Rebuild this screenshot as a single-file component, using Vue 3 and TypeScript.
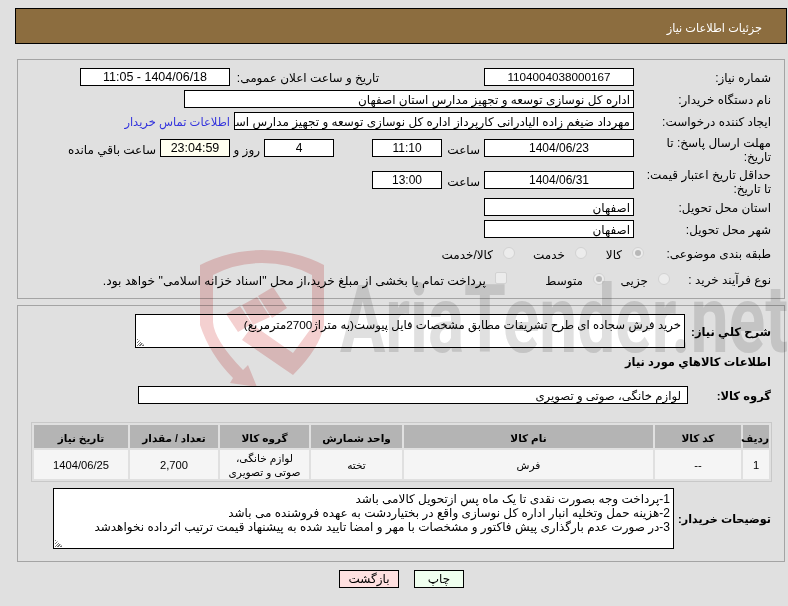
<script setup lang="ts">
const headers: string[] = ['ردیف', 'کد کالا', 'نام کالا', 'واحد شمارش', 'گروه کالا', 'تعداد / مقدار', 'تاریخ نیاز'];
</script>

<template>
  <div class="page" dir="rtl">
    <svg class="mark" viewBox="0 0 788 606" aria-hidden="true">
      <path class="red" d="M200 265 Q230 250 262 250 Q295 250 324 265 L324 325 Q320 348 293 375 L242 340 L253 325 L293 353 L312 327 L312 275 Q290 263 262 263 Q235 263 213 275 L213 322 Q214 340 243 370 L248 365 L257 387 L230 383 L233 378 Q210 355 200 325 Z" />
      <path class="red" d="M226 314 L240 306 L252 324 L238 332 Z" />
      <path class="red" d="M242 305 L257 297 L270 317 L253 325 Z" />
      <path class="red" d="M258 296 L273 287 L287 308 L272 318 Z" />
      <text class="brand" x="340" y="352" textLength="448" lengthAdjust="spacingAndGlyphs">AriaTender.net</text>
    </svg>

    <header class="bar">جزئیات اطلاعات نیاز</header>

    <section class="panel top">
      <div class="row">
        <div class="lab">شماره نیاز:</div>
        <div class="box c n1 num">1104004038000167</div>
        <div class="lab2">تاریخ و ساعت اعلان عمومی:</div>
        <div class="box c n1 wide">1404/06/18 - 11:05</div>
      </div>
      <div class="row g4">
        <div class="lab">نام دستگاه خریدار:</div>
        <div class="box long">اداره کل نوسازی  توسعه و تجهیز مدارس استان اصفهان</div>
      </div>
      <div class="row g4">
        <div class="lab">ایجاد کننده درخواست:</div>
        <div class="box req">مهرداد ضیغم زاده الیادرانی کارپرداز اداره کل نوسازی  توسعه و تجهیز مدارس استان اصفهان</div>
        <a class="contact">اطلاعات تماس خریدار</a>
      </div>
      <div class="row g9">
        <div class="lab two">مهلت ارسال پاسخ: تا تاریخ:</div>
        <div class="box c n1">1404/06/23</div>
        <span class="sa">ساعت</span>
        <div class="box c n3">11:10</div>
        <div class="box c n3 n4">4</div>
        <span class="roz">روز و</span>
        <div class="box c n3 n5 wide">23:04:59</div>
        <span class="rem">ساعت باقي مانده</span>
      </div>
      <div class="row g14">
        <div class="lab two">حداقل تاریخ اعتبار قیمت: تا تاریخ:</div>
        <div class="box c n1">1404/06/31</div>
        <span class="sa">ساعت</span>
        <div class="box c n3">13:00</div>
      </div>
      <div class="row g9">
        <div class="lab">استان محل تحویل:</div>
        <div class="box n1">اصفهان</div>
      </div>
      <div class="row g4">
        <div class="lab">شهر محل تحویل:</div>
        <div class="box n1">اصفهان</div>
      </div>
      <div class="row g6">
        <div class="lab l8">طبقه بندی موضوعی:</div>
        <span class="radio on"></span><span class="opt w26">کالا</span>
        <span class="radio"></span><span class="opt w50">خدمت</span>
        <span class="radio"></span><span class="opt">کالا/خدمت</span>
      </div>
      <div class="row g8">
        <div class="lab l9">نوع فرآیند خرید :</div>
        <span class="radio"></span><span class="opt w43">جزیی</span>
        <span class="radio on"></span><span class="opt w76">متوسط</span>
        <span class="check"></span>
        <span class="opt longopt">پرداخت تمام یا بخشی از مبلغ خرید،از محل "اسناد خزانه اسلامی" خواهد بود.</span>
      </div>
    </section>

    <section class="panel bottom">
      <div class="line">
        <div class="blab b1">شرح کلي نیاز:</div>
        <div class="box area a1">خرید فرش سجاده ای طرح تشریفات مطابق مشخصات فایل پیوست(به متراژ2700مترمربع)<i class="grip"></i></div>
      </div>
      <div class="title">اطلاعات کالاهاي مورد نیاز</div>
      <div class="line grp">
        <div class="blab b2">گروه کالا:</div>
        <div class="box grpbox">لوازم خانگی، صوتی و تصویری</div>
      </div>
      <table class="tbl">
        <thead>
          <tr><th v-for="h in headers" :key="h">{{ h }}</th></tr>
        </thead>
        <tbody>
          <tr>
            <td class="dg">1</td><td class="dg">--</td><td>فرش</td><td>تخته</td>
            <td>لوازم خانگی، صوتی و تصویری</td><td class="dg">2,700</td><td class="dg">1404/06/25</td>
          </tr>
        </tbody>
      </table>
      <div class="line notes">
        <div class="blab b3">توضیحات خریدار:</div>
        <div class="box area a2">1-پرداخت وجه بصورت نقدی تا یک ماه پس ازتحویل کالامی باشد<br />2-هزینه حمل وتخلیه انبار اداره کل نوسازی واقع در بختیاردشت به عهده فروشنده می باشد<br />3-در صورت عدم بارگذاری پیش فاکتور و مشخصات با مهر و امضا تایید شده به پیشنهاد قیمت ترتیب اثرداده نخواهدشد<i class="grip"></i></div>
      </div>
    </section>

    <div class="actions">
      <button class="btn print">چاپ</button>
      <button class="btn back">بازگشت</button>
    </div>
  </div>
</template>

<style>
html, body { margin: 0; background: #e0e0e0; }
</style>

<style scoped>
.page {
  position: relative;
  width: 788px;
  height: 606px;
  overflow: hidden;
  box-sizing: border-box;
  padding: 8px 1px 0 15px;
  background: #e0e0e0;
  font-family: "Liberation Sans", "DejaVu Sans", sans-serif;
  font-size: 12px;
  color: #000;
}
.mark { position: absolute; left: 0; top: 0; width: 788px; height: 606px; pointer-events: none; z-index: 2; mix-blend-mode: multiply; }
.red { fill: #f4d0d0; }
.brand { font-family: Roboto, sans-serif; font-size: 94px; font-weight: 700; fill: #e0e0e0; direction: ltr; unicode-bidi: plaintext; }
.bar {
  height: 36px;
  box-sizing: border-box;
  border: 1px solid #000;
  background: #8c6d3f;
  color: #fff;
  line-height: 33px;
  padding: 3px 24px 0 0;
  font-size: 11.3px;
}
.panel { border: 1px solid #a4a4a4; box-sizing: border-box; margin: 0 2px; }
.top { margin-top: 15px; height: 240px; padding-top: 8px; }
.bottom { margin-top: 6px; height: 257px; padding-top: 8px; }
.row { display: flex; align-items: center; height: 18px; }
.g4 { margin-top: 4px; }
.g6 { margin-top: 6px; }
.g8 { margin-top: 8px; }
.g9 { margin-top: 9px; }
.g14 { margin-top: 14px; }
.lab { flex: none; width: 150px; box-sizing: border-box; padding: 2px 13px 0 12px; line-height: 14px; }
.two { padding-top: 4px; }
.l8 { width: 140px; padding-left: 0; }
.l9 { width: 114px; padding-left: 0; white-space: nowrap; }
.box { background: #fff; border: 1px solid #000; box-sizing: border-box; height: 18px; line-height: 18px; padding: 0 3px; white-space: nowrap; overflow: hidden; flex: none; }
.c { text-align: center; font-size: 12px; line-height: 16px; }
.num { font-size: 11.7px; }
.wide { font-size: 12.5px; }
.n1 { width: 150px; }
.lab2 { width: 149px; margin-right: 105px; padding-top: 2px; white-space: nowrap; flex: none; }
.long { width: 450px; }
.req { width: 400px; }
.contact { color: #3333dd; margin-right: 4px; padding-top: 2px; font-size: 11.5px; white-space: nowrap; }
.sa { width: 38px; padding: 3px 4px 0 0; flex: none; }
.n3 { width: 70px; }
.n4 { margin-right: 38px; }
.roz { margin-right: 4px; padding-top: 3px; width: 30px; flex: none; }
.n5 { background: #fffff0; }
.rem { margin-right: 4px; padding-top: 3px; white-space: nowrap; }
.radio { width: 12px; height: 12px; box-sizing: border-box; border-radius: 50%; background: #ececec; border: 1px solid #d2d2d2; flex: none; position: relative; }
.radio.on::after { content: ""; position: absolute; inset: 2px; border-radius: 50%; background: #b8b8b8; }
.opt { margin-right: 10px; white-space: nowrap; flex: none; padding-top: 4px; }
.longopt { font-size: 12.3px; margin-right: 9px; }
.w26 { width: 35px; }
.w50 { width: 50px; }
.w43 { width: 43px; }
.w76 { width: 76px; }
.check { width: 12px; height: 12px; box-sizing: border-box; margin-top: -3px; background: #ececec; border: 1px solid #d2d2d2; border-radius: 2px; flex: none; }
.line { display: flex; align-items: center; }
.blab { font-weight: 700; font-size: 11.5px; box-sizing: border-box; padding: 2px 13px 0 0; white-space: nowrap; flex: none; }
.b1 { width: 99px; }
.b2 { width: 96px; }
.b3 { width: 110px; font-size: 11.2px; }
.area { position: relative; white-space: normal; line-height: 14px; font-size: 11.7px; }
.a1 { width: 550px; height: 34px; padding-top: 3px; }
.a2 { width: 621px; height: 61px; padding-top: 3px; font-size: 12px; }
.grip { position: absolute; left: 1px; bottom: 1px; width: 8px; height: 8px; background: repeating-linear-gradient(135deg, transparent 0 1px, #777 1px 2px); clip-path: polygon(0 0, 100% 100%, 0 100%); }
.title { font-weight: 700; font-size: 11.5px; line-height: 14px; height: 14px; padding-right: 13px; margin-top: 7px; }
.grp { margin-top: 17px; }
.grpbox { width: 550px; font-size: 11.7px; padding-right: 6px; }
.tbl { width: 741px; margin: 18px 12px 0 0; box-sizing: border-box; border: 1px solid #c8c8c8; border-collapse: separate; border-spacing: 2px; font-size: 10.6px; table-layout: fixed; }
.tbl th { background: #b4b4b4; height: 23px; padding: 2px 0 0; box-sizing: border-box; font-size: 10.5px; font-weight: 700; white-space: nowrap; }
.tbl td { background: #f5f5f5; height: 28px; padding: 1px 4px 0; text-align: center; line-height: 14px; box-sizing: border-box; }
.tbl td.dg { font-size: 11.2px; }
.tbl th:nth-child(1) { width: 26px; }
.tbl th:nth-child(2) { width: 86px; }
.tbl th:nth-child(3) { width: 249px; }
.tbl th:nth-child(4) { width: 91px; }
.tbl th:nth-child(5) { width: 89px; }
.tbl th:nth-child(6) { width: 88px; }
.tbl th:nth-child(7) { width: 94px; }
.notes { margin-top: 6px; }
.actions { display: flex; gap: 15px; margin: 8px 323px 0 0; }
.btn { width: 50px; height: 18px; box-sizing: border-box; border: 1px solid #000; font: inherit; padding: 0; }
.print { background: #efffef; }
.back { background: #ffe0e0; width: 60px; }
</style>
